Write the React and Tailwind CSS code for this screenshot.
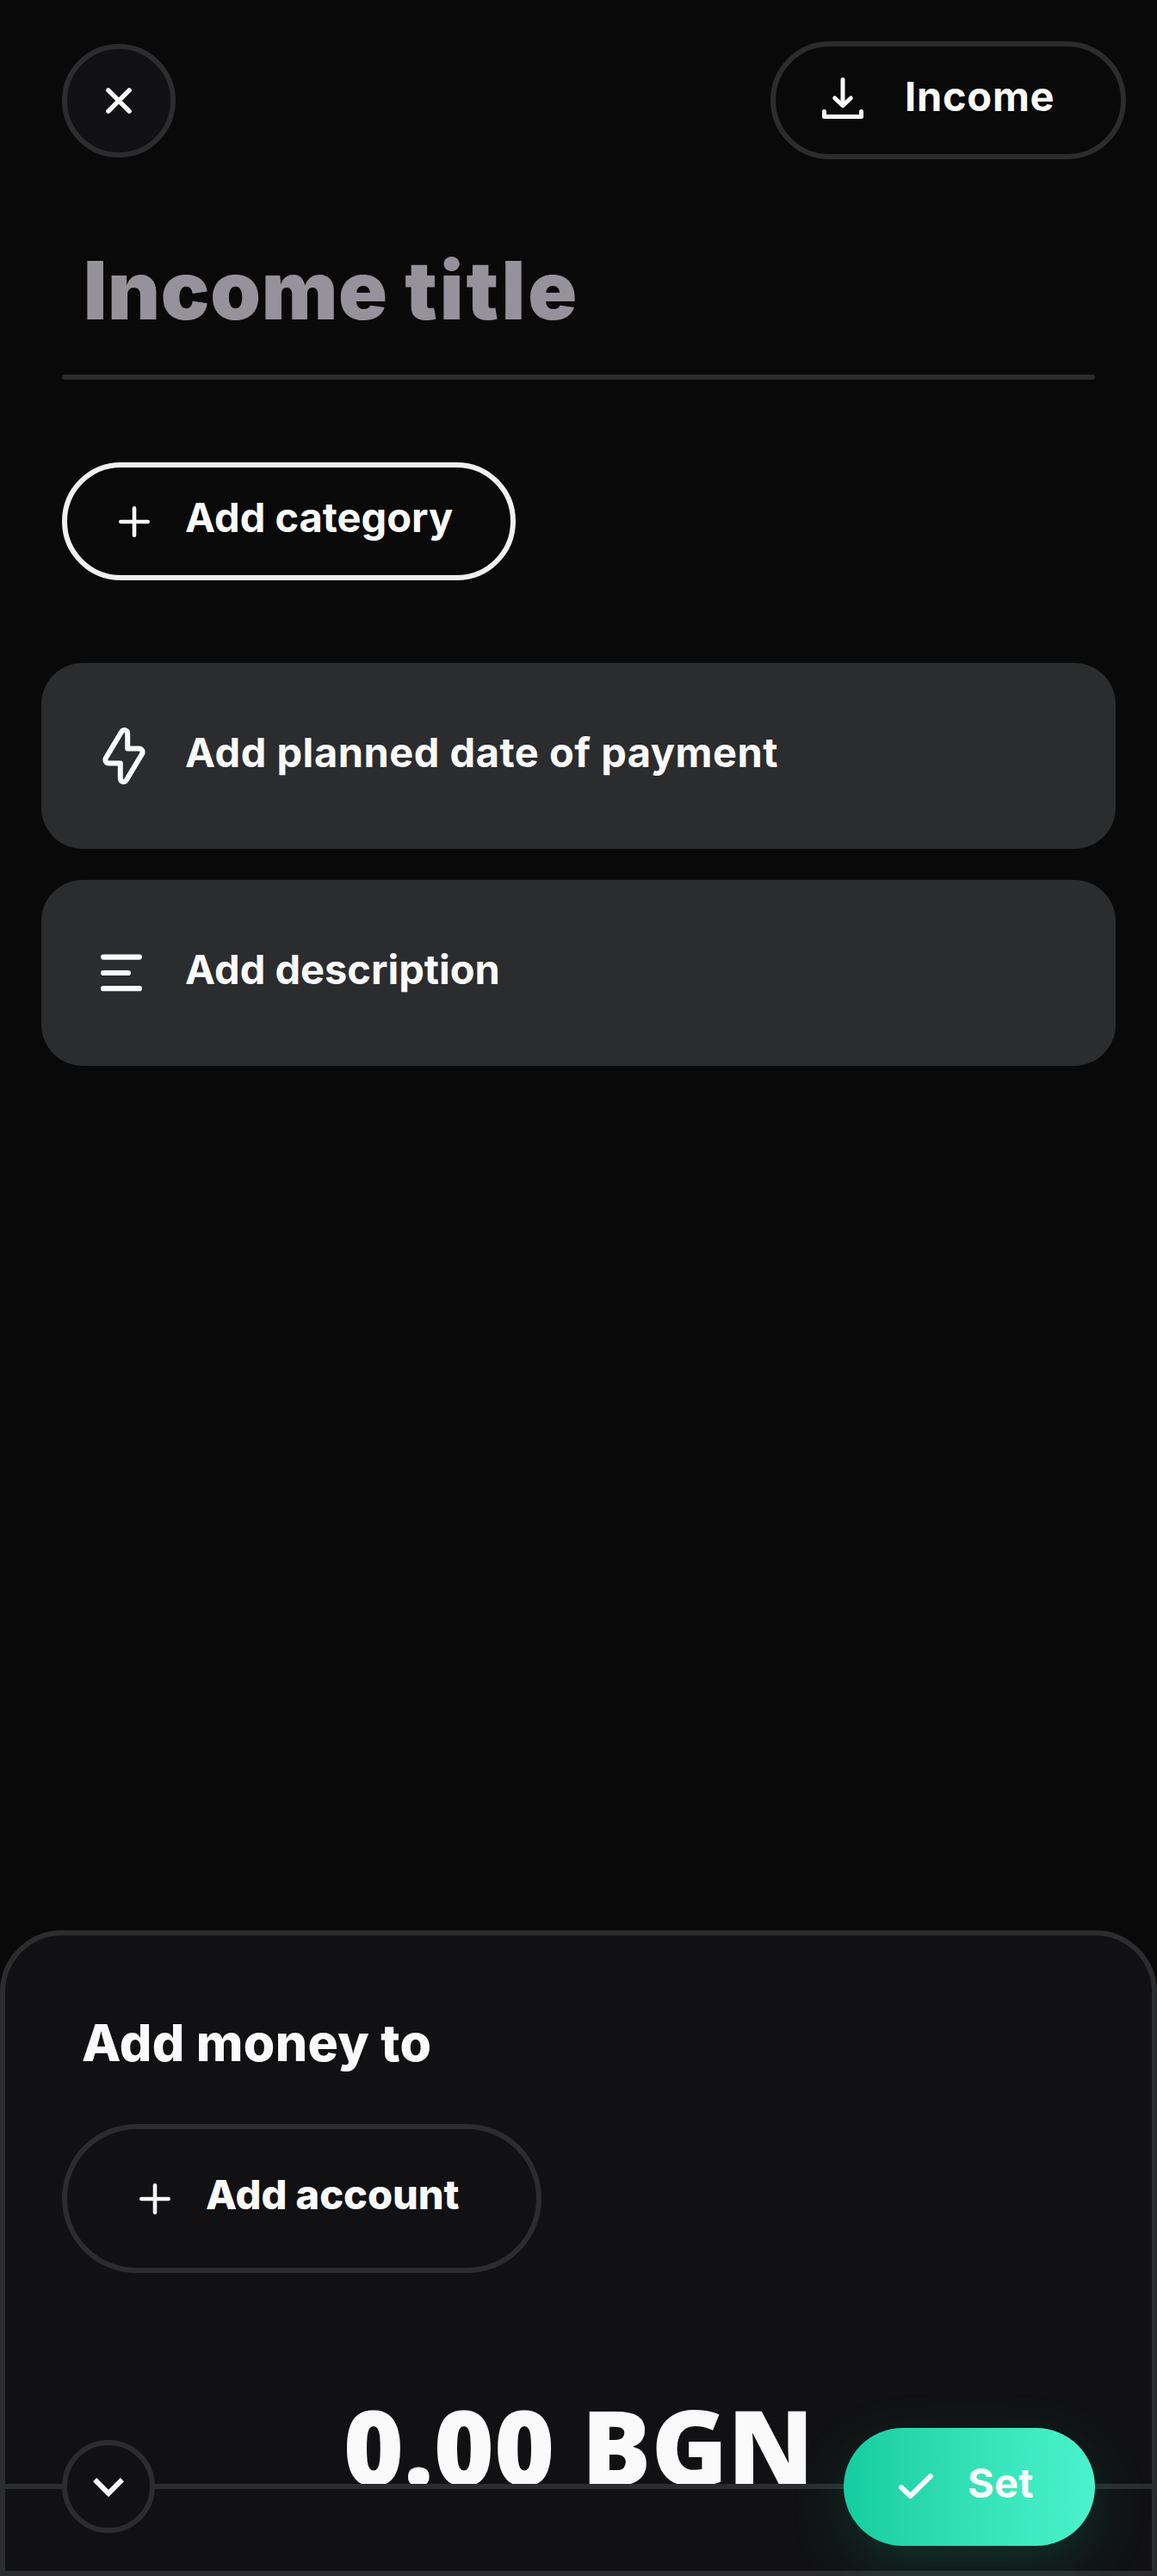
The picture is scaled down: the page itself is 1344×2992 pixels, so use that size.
import React from "react";

const label = "mb-[9px] whitespace-nowrap text-[47px] leading-[60px]";

function CloseIcon() {
  return (
    <svg className="size-[32px]" viewBox="0 0 32 32" fill="none" stroke="currentColor" strokeWidth="5.5" strokeLinecap="round">
      <path d="M3.9 3.9 28.1 28.1M28.1 3.9 3.9 28.1" />
    </svg>
  );
}

function DownloadIcon() {
  return (
    <svg className="mb-[5px] size-[48px]" viewBox="0 0 48 48" fill="none" stroke="currentColor" strokeWidth="5" strokeLinecap="round" strokeLinejoin="round">
      <path d="M24 2.5V32M14.7 24 24 32.8 33.3 24" />
      <path d="M2.5 39.5V45.5H45.5V39.5" />
    </svg>
  );
}

function PlusIcon() {
  return (
    <svg className="size-[36px]" viewBox="0 0 36 36" fill="none" stroke="currentColor" strokeWidth="4.6" strokeLinecap="round">
      <path d="M18 2.3V33.7M2.3 18H33.7" />
    </svg>
  );
}

function BoltIcon() {
  return (
    <svg className="h-[66px] w-[50px]" viewBox="0 0 50 66" fill="none" stroke="currentColor" strokeWidth="6" strokeLinejoin="round">
      <path d="M29.2 7V24.5H42.5C46 24.5 47.6 28 45.8 31L28 60.8C25.8 64.6 20.8 63.2 20.8 59V41.5H7.5C4 41.5 2.4 38 4.2 35L22 5.2C24.2 1.4 29.2 2.8 29.2 7Z" />
    </svg>
  );
}

function LinesIcon() {
  return (
    <svg className="h-[44px] w-[48px]" viewBox="0 0 48 44" fill="none" stroke="currentColor" strokeWidth="6.2" strokeLinecap="round">
      <path d="M3.1 3.6H44.9M3.1 22H31.9M3.1 40.2H44.9" />
    </svg>
  );
}

function ChevronIcon() {
  return (
    <svg className="mt-[2px] h-[28px] w-[36px]" viewBox="0 0 36 28" fill="none" stroke="currentColor" strokeWidth="6">
      <path d="M2.1 5.1 18 21 33.9 5.1" />
    </svg>
  );
}

function CheckIcon() {
  return (
    <svg className="h-[30px] w-[40px]" viewBox="0 0 40 30" fill="none" stroke="currentColor" strokeWidth="6" strokeLinecap="round" strokeLinejoin="round">
      <path d="M3.1 16.1 13.5 26.2 36.9 3.2" />
    </svg>
  );
}

export default function App() {
  return (
    <div className="flex h-[2992px] w-[1344px] flex-col overflow-hidden bg-[#090909] font-['Inter',sans-serif] text-[#fafafa]">
      <header className="flex items-start justify-between pt-12 pr-9 pl-[72px]">
        <button className="mt-[3px] flex size-[132px] items-center justify-center rounded-full border-6 border-[#2b2c2e] bg-[#111113]">
          <CloseIcon />
        </button>
        <button className="flex h-[137px] w-[413px] items-center gap-12 rounded-full border-6 border-[#2b2c2e] pl-[54px]">
          <DownloadIcon />
          <span className={label + " font-bold tracking-[0.75px]"}>Income</span>
        </button>
      </header>

      <main className="flex flex-1 flex-col">
        <h1 className="mt-[104px] pl-[97px] text-[94px] leading-[96px] font-black tracking-[0.7px] text-[#95929b]">
          Income <span className="tracking-[3px]">title</span>
        </h1>
        <div className="mx-[72px] mt-[50px] h-[6px] rounded-full bg-[#2b2c2e]" />
        <button className="mt-24 ml-[72px] flex h-[137px] w-[527px] items-center gap-[41px] rounded-full border-6 border-[#f0f0f1] pl-[60px]">
          <PlusIcon />
          <span className={label + " font-bold"}>Add category</span>
        </button>
        <div className="mt-24 flex flex-col gap-9 px-12">
          <button className="flex h-[216px] items-center gap-[46px] rounded-[48px] bg-[#2b2c2e] pl-[71px]">
            <BoltIcon />
            <span className={label + " font-bold tracking-[0.52px]"}>Add planned date of payment</span>
          </button>
          <button className="flex h-[216px] items-center gap-[50px] rounded-[48px] bg-[#2b2c2e] pl-[69px]">
            <LinesIcon />
            <span className={label + " font-bold"}>Add description</span>
          </button>
        </div>
      </main>

      <section className="flex h-[750px] flex-col rounded-t-[72px] border-6 border-[#2b2c2e] bg-[#111113]">
        <h2 className="mt-[95px] pl-[89px] text-[59px] leading-[60px] font-extrabold tracking-[0.3px]">Add money to</h2>
        <button className="mt-16 ml-[66px] flex h-[173px] w-[557px] items-center gap-[41px] rounded-full border-6 border-[#2b2c2e] pl-[84px]">
          <PlusIcon />
          <span className={label + " font-extrabold tracking-[-0.08px]"}>Add account</span>
        </button>
        <div className="mt-[141px] h-[104px] overflow-hidden text-center font-['Open_Sans',sans-serif] text-[120px] leading-[120px] font-extrabold">
          0.00 BGN
        </div>
        <div className="flex h-[6px] items-center justify-between bg-[#2b2c2e] px-[66px]">
          <button className="flex size-[108px] shrink-0 items-center justify-center rounded-full border-6 border-[#2b2c2e] bg-[#111113]">
            <ChevronIcon />
          </button>
          <button className="flex h-[137px] w-[292px] shrink-0 items-center gap-10 rounded-full bg-linear-to-r from-[#14cda0] to-[#49f4cc] pl-16 shadow-[0_24px_66px_rgba(20,205,160,0.17)]">
            <CheckIcon />
            <span className={label + " font-bold tracking-[0.3px]"}>Set</span>
          </button>
        </div>
      </section>
    </div>
  );
}
